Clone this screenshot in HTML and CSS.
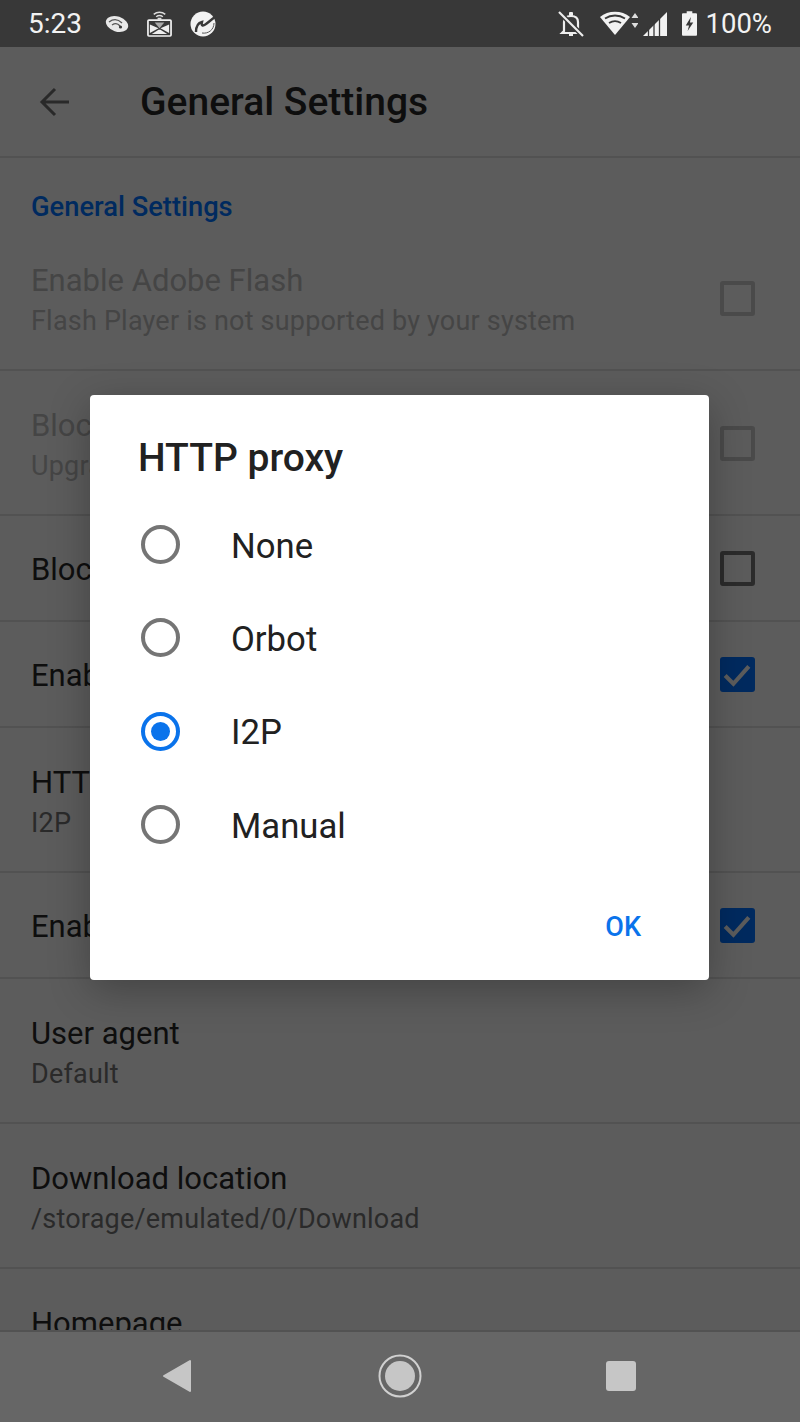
FILE: index.html
```html
<!DOCTYPE html>
<html lang="en">
<head>
    <meta charset="UTF-8">
    <meta name="viewport" content="width=device-width, initial-scale=1.0">
    <title>General Settings</title>
    <link rel="stylesheet" href="styles.css">
</head>
<body>
    <div class="status-bar">
        <span class="clock">5:23</span>
        <div class="status-left">
            <svg class="icon-blob" viewBox="0 0 24 20"><ellipse cx="12" cy="10" rx="11.500" ry="7.500" transform="rotate(18 12 10)" fill="#e8e8e8"/><path d="M4 8c4-3 9-3 13 1M7 11c3-2 6-1.500 8 1" fill="none" stroke="#555" stroke-width="1.300"/><circle cx="15.500" cy="13" r="1.600" fill="#383838"/></svg>
            <svg class="icon-tile" viewBox="0 0 26 28"><path d="M7 4.500c3.500-3 8.500-3 12 0M9.500 7c2-1.500 5-1.500 7 0" fill="none" stroke="#ddd" stroke-width="1.500"/><rect x="11" y="8" width="4" height="2" fill="#ddd"/><rect x="1" y="10.500" width="24" height="16.500" rx="1" fill="none" stroke="#f0f0f0" stroke-width="1.800"/><path d="M3 15l9 4-9 5zM23 15l-9 4 9 5zM5 25l7-4.500h2l7 4.500z" fill="#eee"/><path d="M13 19L8 13h10z" fill="#aaa"/></svg>
            <svg class="icon-ball" viewBox="0 0 26 26"><circle cx="13" cy="13" r="12.500" fill="#f2f2f2"/><path d="M6 21c0-5 2-9 6-10-.5 2-.5 3 .5 3.500C15 15 19 10 25 6" fill="none" stroke="#383838" stroke-width="2.400"/><path d="M24 12c0 7-6 11-12 10" fill="none" stroke="#555" stroke-width="1"/></svg>
        </div>
        <div class="status-right">
            <svg class="icon-bell" viewBox="0 0 28 28"><path d="M7 21V12c0-4 3-6 7-6s7 2 7 6v9l2 2H5z M12 25h4" fill="none" stroke="#eee" stroke-width="2.200"/><rect x="12" y="2" width="4" height="4" rx="1" fill="#eee"/><path d="M3 3l23 23" stroke="#383838" stroke-width="5"/><path d="M2 2l24 24" stroke="#eee" stroke-width="2.200"/></svg>
            <svg class="icon-wifi" viewBox="0 0 38 26"><path d="M15 24L0 6c8-7 22-7 30 0z" fill="#f2f2f2"/><path d="M5 7.500c6-4 14-4 20 0M9 12c4-2.500 8-2.500 12 0" fill="none" stroke="#383838" stroke-width="1.800"/><path d="M35 2l3.500 5h-7zM35 17l-3.500-5h7z" fill="#ddd"/></svg>
            <svg class="icon-signal" viewBox="0 0 24 24"><path d="M0 24L24 0v24z" fill="#f2f2f2"/><path d="M5.500 14v10M11 9v15M16.500 4v20" stroke="#383838" stroke-width="1.300"/></svg>
            <svg class="icon-battery" viewBox="0 0 16 26"><path d="M5 0h6v2h4a1 1 0 0 1 1 1v22a1 1 0 0 1-1 1H1a1 1 0 0 1-1-1V3a1 1 0 0 1 1-1h4z" fill="#f2f2f2"/><path d="M9.500 6L4 15h3.500L6 21l6-9H8.500z" fill="#383838"/></svg>
            <span class="battery-text">100%</span>
        </div>
    </div>

    <div class="main">
        <div class="app-bar">
            <svg class="back-arrow" viewBox="0 0 32 32"><path d="M30 16H4M16 3L3 16l13 13" fill="none" stroke="#292929" stroke-width="3"/></svg>
            <h1 class="app-title">General Settings</h1>
        </div>

        <div class="section-label">General Settings</div>

        <div class="row">
            <div class="row-text disabled">
                <div class="row-title">Enable Adobe Flash</div>
                <div class="row-sub">Flash Player is not supported by your system</div>
            </div>
            <span class="check check-off"></span>
        </div>
        <div class="row">
            <div class="row-text disabled">
                <div class="row-title">Block ads</div>
                <div class="row-sub">Upgrade to Pro</div>
            </div>
            <span class="check check-off"></span>
        </div>
        <div class="row row-single">
            <div class="row-text">
                <div class="row-title">Block popups</div>
            </div>
            <span class="check"></span>
        </div>
        <div class="row row-single">
            <div class="row-text">
                <div class="row-title">Enable JavaScript</div>
            </div>
            <span class="check check-on"><svg viewBox="0 0 34 34"><path d="M5 18l8 8L28 9" fill="none" stroke="#5c5c5c" stroke-width="4"/></svg></span>
        </div>
        <div class="row">
            <div class="row-text">
                <div class="row-title">HTTP proxy</div>
                <div class="row-sub">I2P</div>
            </div>
        </div>
        <div class="row row-single">
            <div class="row-text">
                <div class="row-title">Enable cookies</div>
            </div>
            <span class="check check-on"><svg viewBox="0 0 34 34"><path d="M5 18l8 8L28 9" fill="none" stroke="#5c5c5c" stroke-width="4"/></svg></span>
        </div>
        <div class="row">
            <div class="row-text">
                <div class="row-title">User agent</div>
                <div class="row-sub">Default</div>
            </div>
        </div>
        <div class="row">
            <div class="row-text">
                <div class="row-title">Download location</div>
                <div class="row-sub">/storage/emulated/0/Download</div>
            </div>
        </div>
        <div class="row">
            <div class="row-text">
                <div class="row-title">Homepage</div>
            </div>
        </div>

        <div class="dialog">
            <h2 class="dialog-title">HTTP proxy</h2>
            <div class="option"><span class="radio"></span>None</div>
            <div class="option"><span class="radio"></span>Orbot</div>
            <div class="option"><span class="radio radio-on"></span>I2P</div>
            <div class="option"><span class="radio"></span>Manual</div>
            <div class="dialog-actions"><span class="ok-button">OK</span></div>
        </div>
    </div>

    <div class="nav-bar">
        <svg class="nav-back" viewBox="0 0 30 34"><path d="M28 2v30L2 17z" fill="#c6c6c6" stroke="#c6c6c6" stroke-width="2" stroke-linejoin="round"/></svg>
        <svg class="nav-home" viewBox="0 0 44 44"><circle cx="22" cy="22" r="20.500" fill="none" stroke="#d0d0d0" stroke-width="2"/><circle cx="22" cy="22" r="15" fill="#c6c6c6"/></svg>
        <span class="nav-square"></span>
    </div>
</body>
</html>
```

FILE: styles.css
```css
* {
    box-sizing: border-box;
}

html, body {
    margin: 0;
    padding: 0;
}

body {
    width: 800px;
    height: 1422px;
    display: flex;
    flex-direction: column;
    overflow: hidden;
    font-family: Roboto, "Liberation Sans", sans-serif;
    background-color: #5c5c5c;
}

/* Status bar */
.status-bar {
    height: 47px;
    flex: none;
    display: flex;
    align-items: center;
    padding: 0 28px;
    background-color: #383838;
    color: #f2f2f2;
    font-size: 28px;
}

.clock {
    width: 77px;
}

.status-left {
    display: flex;
    align-items: center;
    gap: 18px;
}

.status-right {
    margin-left: auto;
    display: flex;
    align-items: center;
}

.icon-blob {
    width: 24px;
    height: 20px;
}

.icon-tile {
    width: 25px;
    height: 27px;
}

.icon-ball {
    width: 26px;
    height: 26px;
}

.icon-bell {
    width: 28px;
    height: 28px;
}

.icon-wifi {
    width: 38px;
    height: 26px;
    margin-left: 15px;
}

.icon-signal {
    width: 24px;
    height: 24px;
    margin-left: 5px;
}

.icon-battery {
    width: 15px;
    height: 25px;
    margin-left: 15px;
}

.battery-text {
    margin-left: 8px;
    font-size: 27.5px;
}

/* Settings list, dimmed behind the dialog */
.main {
    position: relative;
    flex: 1;
    min-height: 0;
    overflow: hidden;
}

.app-bar {
    height: 111px;
    display: flex;
    align-items: center;
    border-bottom: 2px solid #525252;
}

.back-arrow {
    width: 32px;
    height: 32px;
    margin-left: 39px;
}

.app-title {
    margin: 0 0 0 69px;
    font-size: 39px;
    font-weight: 500;
    color: #0e0e0e;
}

.section-label {
    height: 68px;
    padding: 32px 0 0 31px;
    font-size: 27.3px;
    line-height: 34px;
    font-weight: 500;
    color: #002a5f;
}

.row {
    height: 145px;
    display: flex;
    align-items: flex-start;
    justify-content: space-between;
    padding: 36px 45px 0 31px;
    border-bottom: 2px solid #525252;
}

.row-single {
    height: 106px;
    padding-top: 35px;
}

.row-title {
    font-size: 31px;
    line-height: 38px;
    color: #0e0e0e;
}

.row-sub {
    margin-top: 3px;
    font-size: 27px;
    line-height: 36px;
    letter-spacing: 0.2px;
    color: #2a2a2a;
}

.disabled .row-title,
.disabled .row-sub {
    color: #454545;
}

.check {
    width: 35px;
    height: 35px;
    border: 4px solid #2b2b2b;
    border-radius: 3px;
}

.check-off {
    margin-top: 19px;
    border-color: #4a4a4a;
}

.check-on {
    border: none;
    background-color: #002a5f;
}

.check-on svg {
    display: block;
    width: 35px;
    height: 35px;
}

/* HTTP proxy dialog */
.dialog {
    position: absolute;
    left: 90px;
    top: 348px;
    width: 619px;
    height: 585px;
    padding: 39px 47px 0 48px;
    background-color: #fff;
    border-radius: 4px;
    box-shadow: 0 10px 40px rgba(0, 0, 0, 0.28);
}

.dialog-title {
    margin: 0 0 17px;
    font-size: 39px;
    line-height: 48px;
    font-weight: 500;
    color: #212121;
}

.option {
    height: 93.3px;
    display: flex;
    align-items: center;
    font-size: 34.7px;
    color: #212121;
}

.radio {
    position: relative;
    width: 39px;
    height: 39px;
    margin: 0 51px 2px 3px;
    border: 4px solid #757575;
    border-radius: 50%;
}

.radio-on {
    border-color: #0a73eb;
}

.radio-on::after {
    content: "";
    position: absolute;
    left: 6px;
    top: 6px;
    width: 19px;
    height: 19px;
    border-radius: 50%;
    background-color: #0a73eb;
}

.dialog-actions {
    display: flex;
    justify-content: flex-end;
    margin-top: 38px;
}

.ok-button {
    margin-right: 21px;
    font-size: 27px;
    line-height: 34px;
    font-weight: 500;
    color: #0a73eb;
}

/* Navigation bar */
.nav-bar {
    height: 92px;
    flex: none;
    display: flex;
    align-items: center;
    padding-bottom: 2px;
    background-color: #666;
    border-top: 2px solid #525252;
}

.nav-back {
    width: 30px;
    height: 34px;
    margin-left: 162px;
}

.nav-home {
    width: 44px;
    height: 44px;
    margin-left: 186px;
}

.nav-square {
    width: 30px;
    height: 30px;
    margin-left: 184px;
    border-radius: 3px;
    background-color: #c6c6c6;
}
```
